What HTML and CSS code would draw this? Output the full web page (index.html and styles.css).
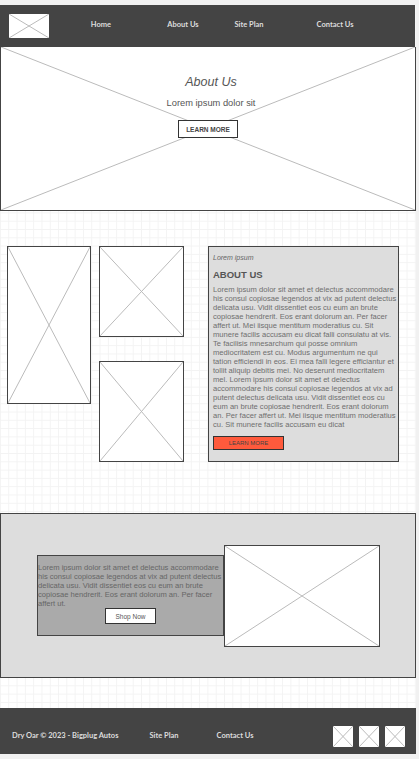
FILE: index.html
```html
<!DOCTYPE html>
<html lang="en">
<head>
    <meta charset="UTF-8">
    <meta name="viewport" content="width=device-width, initial-scale=1.0">
    <title>Dry Oar - Wireframe</title>
    <link rel="stylesheet" href="styles.css">
</head>
<body>
    <div class="page">
        <header class="top-bar">
            <div class="logo ph">
                <svg viewBox="0 0 100 100" preserveAspectRatio="none"><line x1="0" y1="0" x2="100" y2="100"/><line x1="100" y1="0" x2="0" y2="100"/></svg>
            </div>
            <nav class="main-nav">
                <a href="#">Home</a>
                <a href="#">About Us</a>
                <a href="#">Site Plan</a>
                <a href="#">Contact Us</a>
            </nav>
        </header>

        <section class="hero">
            <svg class="hero-bg" viewBox="0 0 100 100" preserveAspectRatio="none"><line x1="0" y1="0" x2="100" y2="100"/><line x1="100" y1="0" x2="0" y2="100"/></svg>
            <div class="hero-text">
                <h2>About Us</h2>
                <p>Lorem ipsum dolor sit</p>
                <button class="outline-btn">LEARN MORE</button>
            </div>
        </section>

        <section class="about">
            <div class="pic pic-tall ph">
                <svg viewBox="0 0 100 100" preserveAspectRatio="none"><line x1="0" y1="0" x2="100" y2="100"/><line x1="100" y1="0" x2="0" y2="100"/></svg>
            </div>
            <div class="pic-col">
                <div class="pic pic-top ph">
                    <svg viewBox="0 0 100 100" preserveAspectRatio="none"><line x1="0" y1="0" x2="100" y2="100"/><line x1="100" y1="0" x2="0" y2="100"/></svg>
                </div>
                <div class="pic pic-bottom ph">
                    <svg viewBox="0 0 100 100" preserveAspectRatio="none"><line x1="0" y1="0" x2="100" y2="100"/><line x1="100" y1="0" x2="0" y2="100"/></svg>
                </div>
            </div>
            <div class="about-card">
                <p class="kicker">Lorem ipsum</p>
                <h3>ABOUT US</h3>
                <p class="body-text">Lorem ipsum dolor sit amet et delectus accommodare his consul copiosae legendos at vix ad putent delectus delicata usu. Vidit dissentiet eos cu eum an brute copiosae hendrerit. Eos erant dolorum an. Per facer affert ut. Mei iisque mentitum moderatius cu. Sit munere facilis accusam eu dicat falli consulatu at vis. Te facilisis mnesarchum qui posse omnium mediocritatem est cu. Modus argumentum ne qui tation efficiendi in eos. Ei mea falli legere efficiantur et tollit aliquip debitis mei. No deserunt mediocritatem mel. Lorem ipsum dolor sit amet et delectus accommodare his consul copiosae legendos at vix ad putent delectus delicata usu. Vidit dissentiet eos cu eum an brute copiosae hendrerit. Eos erant dolorum an. Per facer affert ut. Mei iisque mentitum moderatius cu. Sit munere facilis accusam eu dicat</p>
                <button class="red-btn">LEARN MORE</button>
            </div>
        </section>

        <section class="promo">
            <div class="promo-box">
                <p class="body-text">Lorem ipsum dolor sit amet et delectus accommodare his consul copiosae legendos at vix ad putent delectus delicata usu. Vidit dissentiet eos cu eum an brute copiosae hendrerit. Eos erant dolorum an. Per facer affert ut.</p>
                <button class="shop-btn">Shop Now</button>
            </div>
            <div class="promo-pic ph">
                <svg viewBox="0 0 100 100" preserveAspectRatio="none"><line x1="0" y1="0" x2="100" y2="100"/><line x1="100" y1="0" x2="0" y2="100"/></svg>
            </div>
        </section>

        <footer class="bottom-bar">
            <span class="copy">Dry Oar © 2023 - Bigplug Autos</span>
            <a href="#" class="foot-link plan">Site Plan</a>
            <a href="#" class="foot-link">Contact Us</a>
            <div class="socials">
                <div class="social ph"><svg viewBox="0 0 100 100" preserveAspectRatio="none"><line x1="0" y1="0" x2="100" y2="100"/><line x1="100" y1="0" x2="0" y2="100"/></svg></div>
                <div class="social ph"><svg viewBox="0 0 100 100" preserveAspectRatio="none"><line x1="0" y1="0" x2="100" y2="100"/><line x1="100" y1="0" x2="0" y2="100"/></svg></div>
                <div class="social ph"><svg viewBox="0 0 100 100" preserveAspectRatio="none"><line x1="0" y1="0" x2="100" y2="100"/><line x1="100" y1="0" x2="0" y2="100"/></svg></div>
            </div>
        </footer>
    </div>
</body>
</html>
```

FILE: styles.css
```css
* {
    box-sizing: border-box;
}
body {
    margin: 0;
    padding-top: 5px;
    background: #f1f1f1;
    font-family: "Liberation Sans", Arial, sans-serif;
}
.page {
    width: 416px;
    background-color: #fff;
    background-image:
        linear-gradient(to right, #f3f3f3 1px, transparent 1px),
        linear-gradient(to bottom, #f3f3f3 1px, transparent 1px);
    background-size: 8.3px 8.3px;
}

/* placeholder boxes */
.ph {
    background: #fff;
    border: 1px solid #444;
}
.ph svg {
    display: block;
    width: 100%;
    height: 100%;
}
.ph line, .hero-bg line {
    stroke: #bbb;
    stroke-width: 1;
    vector-effect: non-scaling-stroke;
}

/* header */
.top-bar {
    display: flex;
    align-items: center;
    height: 42px;
    background: #444;
    padding-left: 9px;
    width: 415px;
}
.logo {
    width: 40px;
    height: 24px;
    border: none;
}
.main-nav {
    display: grid;
    grid-template-columns: 104px 60px 72px 100px;
    padding-bottom: 3px;
}
.main-nav a {
    text-align: center;
    color: #ddd;
    font-family: Lato, "Liberation Sans", sans-serif;
    font-weight: bold;
    font-size: 7.5px;
    text-decoration: none;
}

/* hero */
.hero {
    position: relative;
    height: 164px;
    background: #fff;
    border: 1px solid #444;
    border-top: none;
}
.hero-bg {
    position: absolute;
    inset: 0;
    width: 100%;
    height: 100%;
}
.hero-text {
    position: relative;
    display: flex;
    flex-direction: column;
    align-items: center;
    padding-top: 28px;
    padding-left: 6px;
    color: #555;
}
.hero-text h2 {
    margin: 0;
    font-size: 12.5px;
    font-weight: normal;
    font-style: italic;
}
.hero-text p {
    margin: 9px 0 12px;
    font-size: 9.3px;
}
.outline-btn {
    width: 60px;
    height: 18px;
    padding: 0;
    background: #fff;
    border: 1px solid #333;
    color: #444;
    font-family: "Liberation Sans", Arial, sans-serif;
    font-size: 6.5px;
    font-weight: bold;
    margin-left: -6px;
}

/* about */
.about {
    display: flex;
    align-items: flex-start;
    padding: 35px 0 0 7px;
    height: 302px;
}
.pic-tall {
    width: 84px;
    height: 158px;
}
.pic-col {
    display: flex;
    flex-direction: column;
    gap: 24px;
    margin-left: 8px;
}
.pic-top {
    width: 85px;
    height: 91px;
}
.pic-bottom {
    width: 85px;
    height: 101px;
}
.about-card {
    width: 191px;
    height: 216px;
    margin-left: 24px;
    background: #ddd;
    border: 1px solid #444;
    padding: 7px 0 0 4px;
}
.kicker {
    margin: 0;
    font-size: 7px;
    font-style: italic;
    color: #666;
}
.about-card h3 {
    margin: 8px 0 5px;
    font-size: 9.5px;
    color: #555;
}
.body-text {
    margin: 0;
    font-size: 7.6px;
    line-height: 9px;
    color: #6e6e6e;
}
.red-btn {
    display: block;
    width: 71px;
    height: 14px;
    margin-top: 7px;
    padding: 0;
    background: #ff5a3c;
    border: 1px solid #333;
    color: #444;
    font-family: "Liberation Sans", Arial, sans-serif;
    font-size: 6px;
}

/* promo */
.promo {
    display: flex;
    align-items: center;
    height: 165px;
    padding-left: 36px;
    background: #ddd;
    border: 1px solid #444;
}
.promo-box {
    width: 187px;
    height: 81px;
    padding-top: 7px;
    background: #aaa;
    border: 1px solid #444;
}
.promo-box .body-text {
    color: #666;
}
.shop-btn {
    display: block;
    width: 51px;
    height: 16px;
    margin: 0 auto;
    padding: 0;
    background: #fff;
    border: 1px solid #333;
    color: #555;
    font-family: "Liberation Sans", Arial, sans-serif;
    font-size: 6.5px;
}
.promo-pic {
    width: 156px;
    height: 102px;
}

/* footer */
.bottom-bar {
    display: flex;
    align-items: center;
    height: 46px;
    margin-top: 30px;
    padding: 8px 0 0 12px;
    background: #444;
    color: #ddd;
    font-family: Lato, "Liberation Sans", sans-serif;
    font-size: 7.5px;
    font-weight: bold;
}
.foot-link {
    color: #ddd;
    text-decoration: none;
}
.plan {
    margin-left: 31px;
}
.plan + .foot-link {
    margin-left: 38px;
}
.socials {
    display: flex;
    gap: 6px;
    margin-left: auto;
    margin-right: 11px;
    padding-top: 3px;
}
.social {
    width: 20px;
    height: 21px;
    border: none;
}
```
